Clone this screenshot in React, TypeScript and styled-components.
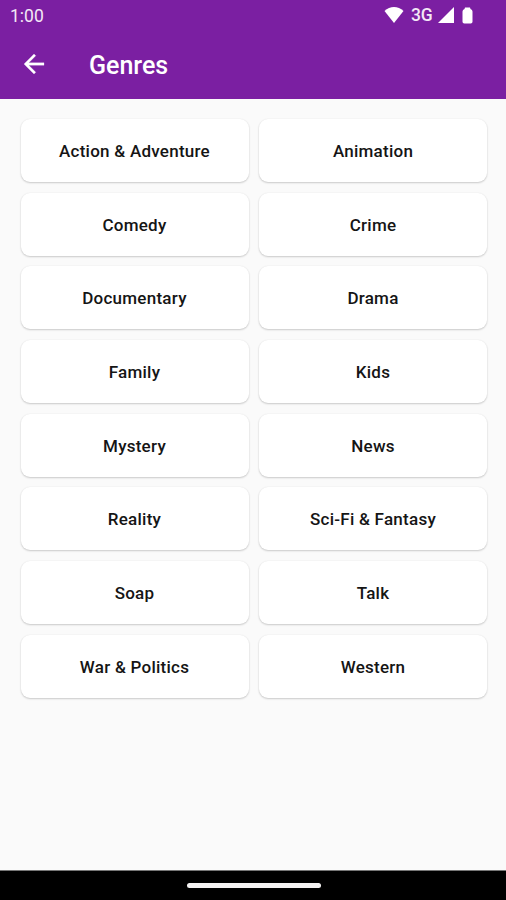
import React from 'react';
import styled, { createGlobalStyle } from 'styled-components';

const GlobalStyle = createGlobalStyle`
  * { box-sizing: border-box; }
  body { margin: 0; background: #fafafa; }
`;

const Screen = styled.div`
  width: 506px;
  height: 900px;
  display: flex;
  flex-direction: column;
  background: #fafafa;
  font-family: Roboto, sans-serif;
  overflow: hidden;
`;

const Header = styled.header`
  height: 99px;
  background: #7b1fa2;
  color: #fff;
`;

const StatusBar = styled.div`
  height: 32px;
  padding: 0 33px 0 10px;
  display: flex;
  align-items: center;
  justify-content: space-between;
`;

const Clock = styled.span`
  font-size: 17.5px;
  line-height: 32px;
  color: #f3e8f6;
`;

const StatusIcons = styled.div`
  display: flex;
  align-items: center;
  height: 30px;
  margin-bottom: 2px;
`;

const Network = styled.span`
  width: 23px;
  margin: 0 4px 0 7px;
  font-size: 17.5px;
  font-weight: 500;
  line-height: 20px;
  letter-spacing: -0.2px;
  color: #f3e8f6;
`;

const BatteryIcon = styled.svg`
  margin-left: 8px;
`;

const AppBar = styled.div`
  height: 67px;
  padding-left: 19px;
  display: flex;
  align-items: center;
`;

const BackButton = styled.button`
  width: 29px;
  height: 30px;
  padding: 0;
  border: 0;
  background: none;
  color: inherit;
  margin-bottom: 4px;
`;

const BackIcon = styled.svg`
  display: block;
`;

const Title = styled.h1`
  margin: 1px 0 0 41px;
  font-size: 25px;
  font-weight: 500;
  line-height: 30px;
`;

const Grid = styled.main`
  flex: 1;
  display: grid;
  grid-template-columns: 228px 228px;
  grid-auto-rows: 63px;
  align-content: start;
  justify-content: start;
  gap: 10.7px 10.5px;
  padding: 20px 0 0 20.5px;
`;

const GenreCard = styled.button`
  border: 0;
  padding: 1px 0 0;
  border-radius: 9px;
  background: #fff;
  color: #151515;
  font: 500 17px/24px Roboto, sans-serif;
  letter-spacing: 0.25px;
  box-shadow: 0 1px 2px rgba(0, 0, 0, 0.19), 0 0 2px rgba(0, 0, 0, 0.06);
`;

const NavBar = styled.footer`
  height: 30px;
  background: #000;
  border-top: 1px solid #777;
  display: flex;
  align-items: center;
  justify-content: center;
`;

const HomeHandle = styled.div`
  width: 134px;
  height: 5px;
  margin-left: 1px;
  border-radius: 2.5px;
  background: #f4f2f2;
`;

const genres = [
  'Action & Adventure', 'Animation', 'Comedy', 'Crime', 'Documentary', 'Drama',
  'Family', 'Kids', 'Mystery', 'News', 'Reality', 'Sci-Fi & Fantasy',
  'Soap', 'Talk', 'War & Politics', 'Western',
];

export default function App() {
  return (
    <Screen>
      <GlobalStyle />
      <Header>
        <StatusBar>
          <Clock>1:00</Clock>
          <StatusIcons>
            <svg width="20" height="16" viewBox="0 0 20 16" fill="#fff"><path d="M.5 4C6-1.200 14-1.200 19.500 4L10 16Z" /></svg>
            <Network>3G</Network>
            <svg width="16" height="16" viewBox="0 0 16 16" fill="#fff"><path d="M16 0V16H0Z" /></svg>
            <BatteryIcon width="11" height="17" viewBox="0 0 11 17" fill="#fff"><path d="M3 .5H8L8.500 2Q10.500 2.500 10.500 4.500V14.700Q10.500 16.500 8.700 16.500H2.300Q.5 16.500.5 14.700V4.500Q.5 2.500 2.500 2Z" /></BatteryIcon>
          </StatusIcons>
        </StatusBar>
        <AppBar>
          <BackButton aria-label="Back">
            <BackIcon width="30" height="30" viewBox="0 0 24 24" fill="currentColor" stroke="currentColor" strokeWidth="0.2"><path d="M20 11H7.83l5.59-5.59L12 4l-8 8 8 8 1.41-1.41L7.83 13H20v-2z" /></BackIcon>
          </BackButton>
          <Title>Genres</Title>
        </AppBar>
      </Header>
      <Grid>
        {genres.map((genre) => <GenreCard key={genre}>{genre}</GenreCard>)}
      </Grid>
      <NavBar><HomeHandle /></NavBar>
    </Screen>
  );
}
